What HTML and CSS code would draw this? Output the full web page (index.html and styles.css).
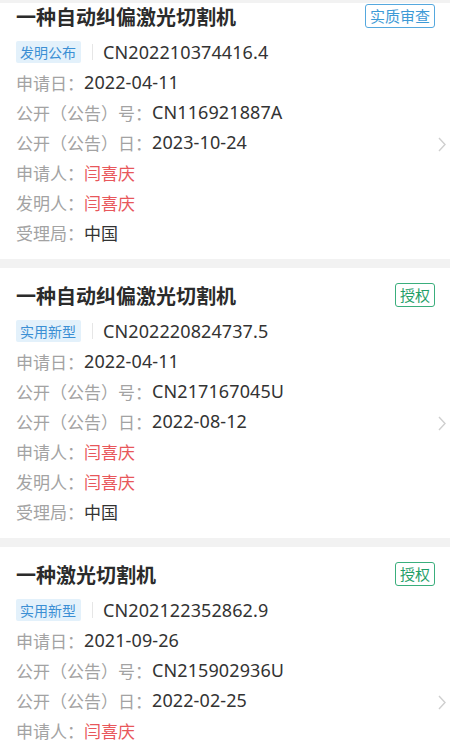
FILE: index.html
```html
<!DOCTYPE html>
<html>
<head>
    <meta charset="utf-8">
    <title>专利列表</title>
    <link rel="stylesheet" href="styles.css">
</head>
<body>
    <div class="top-edge"></div>
    <div class="list">
        <div class="card">
            <div class="card-head">
                <div class="title">一种自动纠偏激光切割机</div>
                <span class="status status-blue">实质审查</span>
            </div>
            <div class="card-body">
                <div class="info">
                    <div class="row">
                        <span class="type-tag">发明公布</span>
                        <span class="divider"></span>
                        <span class="value">CN202210374416.4</span>
                    </div>
                    <div class="row"><span class="label">申请日：</span><span class="value">2022-04-11</span></div>
                    <div class="row"><span class="label">公开（公告）号：</span><span class="value">CN116921887A</span></div>
                    <div class="row"><span class="label">公开（公告）日：</span><span class="value">2023-10-24</span></div>
                    <div class="row"><span class="label">申请人：</span><span class="person">闫喜庆</span></div>
                    <div class="row"><span class="label">发明人：</span><span class="person">闫喜庆</span></div>
                    <div class="row"><span class="label">受理局：</span><span class="plain">中国</span></div>
                </div>
                <svg class="chevron" width="8" height="15" viewBox="0 0 8 15"><path d="M1 1 L7 7.5 L1 14" fill="none" stroke="#cfcfcf" stroke-width="1.4"/></svg>
            </div>
        </div>

        <div class="card">
            <div class="card-head">
                <div class="title">一种自动纠偏激光切割机</div>
                <span class="status status-green">授权</span>
            </div>
            <div class="card-body">
                <div class="info">
                    <div class="row">
                        <span class="type-tag">实用新型</span>
                        <span class="divider"></span>
                        <span class="value">CN202220824737.5</span>
                    </div>
                    <div class="row"><span class="label">申请日：</span><span class="value">2022-04-11</span></div>
                    <div class="row"><span class="label">公开（公告）号：</span><span class="value">CN217167045U</span></div>
                    <div class="row"><span class="label">公开（公告）日：</span><span class="value">2022-08-12</span></div>
                    <div class="row"><span class="label">申请人：</span><span class="person">闫喜庆</span></div>
                    <div class="row"><span class="label">发明人：</span><span class="person">闫喜庆</span></div>
                    <div class="row"><span class="label">受理局：</span><span class="plain">中国</span></div>
                </div>
                <svg class="chevron" width="8" height="15" viewBox="0 0 8 15"><path d="M1 1 L7 7.5 L1 14" fill="none" stroke="#cfcfcf" stroke-width="1.4"/></svg>
            </div>
        </div>

        <div class="card">
            <div class="card-head">
                <div class="title">一种激光切割机</div>
                <span class="status status-green">授权</span>
            </div>
            <div class="card-body">
                <div class="info">
                    <div class="row">
                        <span class="type-tag">实用新型</span>
                        <span class="divider"></span>
                        <span class="value">CN202122352862.9</span>
                    </div>
                    <div class="row"><span class="label">申请日：</span><span class="value">2021-09-26</span></div>
                    <div class="row"><span class="label">公开（公告）号：</span><span class="value">CN215902936U</span></div>
                    <div class="row"><span class="label">公开（公告）日：</span><span class="value">2022-02-25</span></div>
                    <div class="row"><span class="label">申请人：</span><span class="person">闫喜庆</span></div>
                    <div class="row"><span class="label">发明人：</span><span class="person">闫喜庆</span></div>
                    <div class="row"><span class="label">受理局：</span><span class="plain">中国</span></div>
                </div>
                <svg class="chevron" width="8" height="15" viewBox="0 0 8 15"><path d="M1 1 L7 7.5 L1 14" fill="none" stroke="#cfcfcf" stroke-width="1.4"/></svg>
            </div>
        </div>
    </div>
</body>
</html>
```

FILE: styles.css
```css
html, body {
    height: 100%;
    overflow: hidden;
}
body {
    margin: 0;
    background-color: #f2f2f2;
    font-family: "Noto Sans", "Noto Sans CJK SC", sans-serif;
    color: #333;
}
.top-edge {
    position: fixed;
    top: 0;
    left: 0;
    right: 0;
    height: 3px;
    background: #f2f2f2;
    z-index: 2;
}
/* list is scrolled a little, first card is cut at the top */
.list {
    margin-top: -11px;
    display: flex;
    flex-direction: column;
    gap: 9px;
}
.card {
    background: #fff;
    padding: 12px 4px 12px 16px;
}
.card-head {
    display: flex;
    align-items: center;
    justify-content: space-between;
    height: 30px;
    margin-right: 11px;
    margin-bottom: 6px;
}
.title {
    font-size: 20px;
    font-weight: bold;
    color: #2b2b2b;
    font-family: "Noto Sans CJK SC", sans-serif;
}
.status {
    box-sizing: border-box;
    height: 24px;
    padding: 0 4px;
    border: 1.5px solid;
    border-radius: 3px;
    font-size: 15px;
    line-height: 21px;
    font-family: "Noto Sans CJK SC", sans-serif;
}
.status-blue {
    color: #3d9ad6;
    border-color: #55a8de;
}
.status-green {
    color: #1f9e68;
    border-color: #3aae7c;
}
.card-body {
    display: flex;
    align-items: center;
}
.info {
    flex: 1;
}
.chevron {
    flex: none;
    margin-top: 4px;
}
.row {
    display: flex;
    align-items: center;
    height: 30px;
    white-space: nowrap;
}
.type-tag {
    height: 22px;
    padding: 0 5px 0 4px;
    background: #e3f1fb;
    color: #3b8fd4;
    border-radius: 2px;
    font-size: 14px;
    line-height: 22px;
    font-family: "Noto Sans CJK SC", sans-serif;
}
.divider {
    width: 1px;
    height: 16px;
    background: #e6e6e6;
    margin: 0 10px 0 11px;
}
.label {
    font-size: 17px;
    color: #a3a3a3;
    font-family: "Noto Sans CJK SC", sans-serif;
}
.value {
    font-size: 18px;
    color: #333;
    letter-spacing: 0.1px;
}
.person {
    font-size: 17px;
    color: #e8575b;
    font-family: "Noto Sans CJK SC", sans-serif;
}
.plain {
    font-size: 17px;
    color: #333;
    font-family: "Noto Sans CJK SC", sans-serif;
}
```
